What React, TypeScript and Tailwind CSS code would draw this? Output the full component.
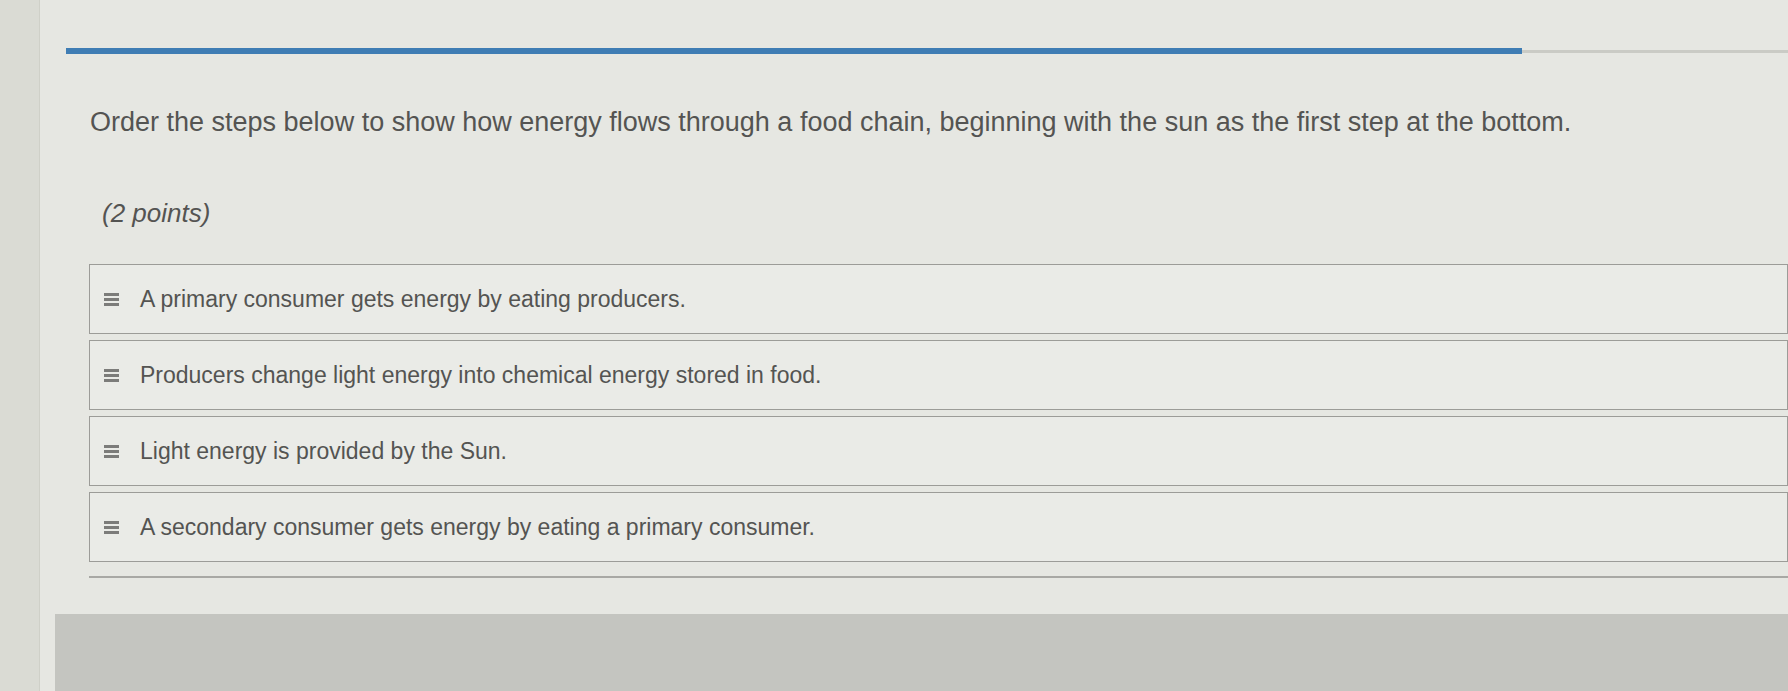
import React from "react";

const steps = [
  "A primary consumer gets energy by eating producers.",
  "Producers change light energy into chemical energy stored in food.",
  "Light energy is provided by the Sun.",
  "A secondary consumer gets energy by eating a primary consumer.",
];

function Grip() {
  return (
    <svg width="15" height="13" viewBox="0 0 15 13" className="shrink-0">
      <rect x="0" y="0" width="15" height="3" fill="#7c7c7a" />
      <rect x="0" y="5" width="15" height="3" fill="#7c7c7a" />
      <rect x="0" y="10" width="15" height="3" fill="#7c7c7a" />
    </svg>
  );
}

function StepRow({ text }: { text: string }) {
  return (
    <div className="flex h-[70px] items-center border-[1.5px] border-[#9c9c98] bg-[#eaebe7] pl-[14px]">
      <Grip />
      <span className="ml-[21px] text-[23px] text-[#545452]">{text}</span>
    </div>
  );
}

export default function App() {
  return (
    <div
      className="flex h-[691px] w-full overflow-hidden bg-[#dcddd6]"
      style={{ fontFamily: '"Liberation Sans", Arial, sans-serif' }}
    >
      <div className="w-[40px] shrink-0 border-r border-[#cfd0c8] bg-[#dadbd4]" />
      <div className="flex flex-1 flex-col bg-[#e6e7e2]">
        {/* progress bar */}
        <div className="mt-[48px] flex items-center pl-[26px]">
          <div className="h-[6px] w-[1456px] bg-[#3f7db4]" />
          <div className="h-[3px] flex-1 bg-[#cacbc5]" />
        </div>

        <p className="ml-[50px] mt-[52px] text-[27px] leading-[32px] text-[#545452]">
          Order the steps below to show how energy flows through a food chain, beginning with the sun as the first step at the bottom.
        </p>

        <p className="ml-[62px] mt-[60px] text-[26px] italic leading-[30px] text-[#545452]">(2 points)</p>

        <div className="ml-[49px] mt-[36px] flex flex-col gap-[6px]">
          {steps.map((s) => (
            <StepRow key={s} text={s} />
          ))}
        </div>
        <div className="ml-[49px] mt-[14px] h-[1.5px] bg-[#a8a8a4]" />

        <div className="ml-[15px] mt-[36px] flex-1 bg-[#c4c5c0]" />
      </div>
    </div>
  );
}
